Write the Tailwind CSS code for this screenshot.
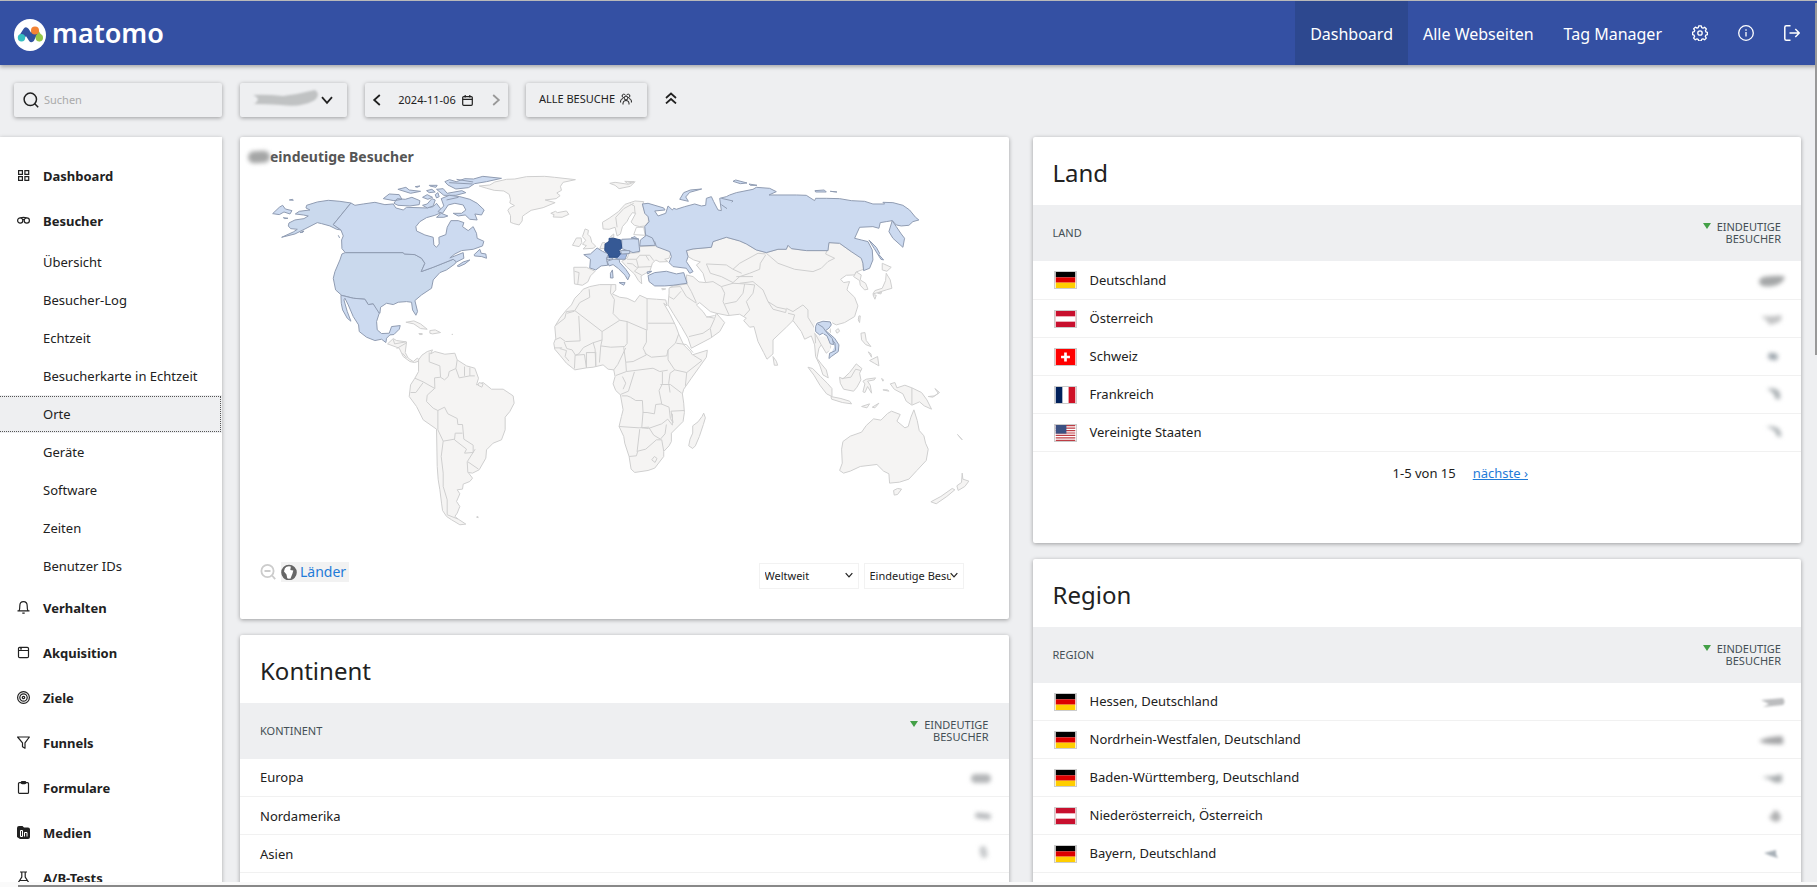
<!DOCTYPE html>
<html lang="de">

<head>
  <meta charset="UTF-8">
  <title>Orte - Matomo</title>
  <script src="https://cdn.jsdelivr.net/npm/@tailwindcss/browser@4"></script>
</head>

<body class="flex flex-col h-screen overflow-hidden bg-[#eeeff1] text-[#212121] text-[13px] font-['Noto_Sans',sans-serif]">

  <!-- Shared icons and flags -->
  <svg class="hidden">
    <symbol id="flag-de" viewBox="0 0 22 18">
      <path fill="#000" d="M0 0h22v6H0z" />
      <path fill="#d00" d="M0 6h22v6H0z" />
      <path fill="#ffce00" d="M0 12h22v6H0z" />
    </symbol>
    <symbol id="flag-at" viewBox="0 0 22 18">
      <path fill="#c8102e" d="M0 0h22v18H0z" />
      <path fill="#fff" d="M0 6h22v6H0z" />
    </symbol>
    <symbol id="flag-ch" viewBox="0 0 22 18">
      <path fill="#f00" d="M0 0h22v18H0z" />
      <path fill="#fff" d="M9.500 4h3v3.500H16v3h-3.500V14h-3v-3.500H6v-3h3.500z" />
    </symbol>
    <symbol id="flag-fr" viewBox="0 0 22 18">
      <path fill="#00205b" d="M0 0h8v18H0z" />
      <path fill="#fff" d="M7.500 0h7v18h-7z" />
      <path fill="#ce1126" d="M14.500 0H22v18h-7.500z" />
    </symbol>
    <symbol id="flag-us" viewBox="0 0 22 18">
      <path fill="#fff" d="M0 0h22v18H0z" />
      <path stroke="#bd3d44" stroke-width="1.400" d="M0 .7h22M0 3.500h22M0 6.200h22M0 9h22M0 11.800h22M0 14.500h22M0 17.300h22" />
      <path fill="#3b5082" d="M0 0h12v9.700H0z" />
    </symbol>
    <symbol id="chevron" viewBox="0 0 12 12">
      <path fill="none" stroke="currentColor" stroke-width="1.800" d="M1 3.200 6 8.800l5-5.600" />
    </symbol>
  </svg>

  <div class="h-px shrink-0 bg-[#c0c0c0]"></div>

  <header class="relative z-10 flex h-16 shrink-0 items-center justify-between bg-[#3450a3] text-white shadow-[0_2px_4px_rgba(0,0,0,0.3)]">
    <a href="#" class="flex items-center gap-[6px] pl-[14px] pt-1">
      <svg class="size-8" viewBox="0 0 32 32">
        <circle cx="16" cy="16" r="16" fill="#fff" />
        <path d="M21 11.500 25.500 19" stroke="#95c748" stroke-width="6" stroke-linecap="round" />
        <path d="M7.500 18.500 12 11.500l5.500 8.500L21 12.500" fill="none" stroke="#3152a0" stroke-width="6" stroke-linejoin="round" stroke-linecap="round" />
        <circle cx="21" cy="11.500" r="4" fill="#f38334" />
        <circle cx="7.500" cy="18.800" r="3.700" fill="#35bfc0" />
        <circle cx="25.300" cy="18.800" r="3.700" fill="#95c748" />
      </svg>
      <span class="-mt-1 text-[27px] leading-8 font-semibold">matomo</span>
    </a>
    <nav class="flex h-full items-center pr-[17px] text-base">
      <a href="#" class="flex h-full items-center bg-[#2d488f] px-[15px] pt-px">Dashboard</a>
      <a href="#" class="flex h-full items-center px-[15px] pt-px">Alle Webseiten</a>
      <a href="#" class="flex h-full items-center px-[15px] pt-px">Tag Manager</a>
      <a href="#" aria-label="Administration" class="px-[15px]">
        <svg class="size-4" viewBox="0 0 16 16" fill="none" stroke="currentColor" stroke-width="1.300" stroke-linejoin="round">
          <path d="M6.700.8h2.600l.4 1.900 1.300.5 1.600-1 1.800 1.800-1 1.600.5 1.300 1.500.4v2.400l-1.600.5-.5 1.300 1 1.600-1.700 1.700-1.700-1-1.300.5-.4 1.600H6.700l-.5-1.600-1.200-.5-1.700 1-1.700-1.700 1-1.700-.5-1.200-1.500-.5V7.100l1.600-.4.5-1.300-1-1.600 1.700-1.700 1.700 1 1.200-.5z" />
          <circle cx="8" cy="8" r="2.200" />
        </svg>
      </a>
      <a href="#" aria-label="Hilfe" class="px-[15px]">
        <svg class="size-4" viewBox="0 0 16 16" fill="none" stroke="currentColor" stroke-width="1.300">
          <circle cx="8" cy="8" r="7.300" />
          <path d="M8 7v4.500M8 4.200v1.500" />
        </svg>
      </a>
      <a href="#" aria-label="Abmelden" class="pl-[15px]">
        <svg class="size-4" viewBox="0 0 16 16" fill="none" stroke="currentColor" stroke-width="1.500">
          <path d="M6.500.8H2.300Q.8.800.8 2.300v11.400q0 1.500 1.500 1.500h4.200M5.500 8h9.300M11.300 4l4 4-4 4" />
        </svg>
      </a>
    </nav>
  </header>

  <div class="flex min-h-0 flex-1 gap-[18px] overflow-hidden pt-[18px] pr-4">

    <!-- Sidebar -->
    <aside class="flex w-[222px] shrink-0 flex-col gap-5">
      <form class="pl-[14px]">
        <label class="flex h-[34px] items-center gap-[5px] rounded-xs pl-[9px] shadow-[0_1px_4px_rgba(0,0,0,0.35)]">
          <svg class="size-4 shrink-0" viewBox="0 0 16 16" fill="none" stroke="#212121" stroke-width="1.500">
            <circle cx="7.300" cy="7.300" r="6.200" />
            <path d="m11.500 11.500 3.700 3.700" />
          </svg>
          <input type="search" aria-label="Suchen" placeholder="Suchen" class="w-full bg-transparent text-[11px] outline-none placeholder:text-[#aaa]">
        </label>
      </form>

      <nav class="flex-1 bg-white pt-4 shadow-[0_1px_4px_rgba(0,0,0,0.3)]">
        <a href="#" class="flex h-[45px] items-center gap-[13px] pt-[2px] pl-[17px] font-bold">
          <svg class="mb-[2px] size-[13px]" viewBox="0 0 13 13" fill="none" stroke="currentColor" stroke-width="1.200">
            <path d="M1.600 1.600h3.800v3.800H1.600zM7.900 1.600h3.800v3.800H7.900zM1.600 7.600h3.800v3.800H1.600zM7.900 7.600h3.800v3.800H7.900z" />
          </svg>
          Dashboard
        </a>
        <a href="#" class="flex h-[45px] items-center gap-[13px] pt-[2px] pl-[17px] font-bold">
          <svg class="mb-[2px] size-[13px]" viewBox="0 0 13 13" fill="none" stroke="currentColor" stroke-width="1.200">
            <circle cx="3.200" cy="6.500" r="2.600" />
            <circle cx="9.800" cy="6.500" r="2.600" />
            <path d="M3.500 3.800c2-.6 4-.6 6 0M5.600 5.800q.9-.8 1.800 0" />
          </svg>
          Besucher
        </a>
        <a href="#" class="flex h-[38px] items-center pt-[2px] pl-[43px]">Übersicht</a>
        <a href="#" class="flex h-[38px] items-center pt-[2px] pl-[43px]">Besucher-Log</a>
        <a href="#" class="flex h-[38px] items-center pt-[2px] pl-[43px]">Echtzeit</a>
        <a href="#" class="flex h-[38px] items-center pt-[2px] pl-[43px]">Besucherkarte in Echtzeit</a>
        <div class="bg-[#eeeff1] py-px pr-px">
          <a href="#" class="flex h-9 items-center border-y border-r border-dotted border-[#555] pt-[2px] pl-[43px]">Orte</a>
        </div>
        <a href="#" class="flex h-[38px] items-center pt-[2px] pl-[43px]">Geräte</a>
        <a href="#" class="flex h-[38px] items-center pt-[2px] pl-[43px]">Software</a>
        <a href="#" class="flex h-[38px] items-center pt-[2px] pl-[43px]">Zeiten</a>
        <a href="#" class="flex h-[38px] items-center pt-[2px] pl-[43px]">Benutzer IDs</a>
        <a href="#" class="flex h-[45px] items-center gap-[13px] pt-[2px] pl-[17px] font-bold">
          <svg class="mb-[2px] size-[13px]" viewBox="0 0 13 13" fill="none" stroke="currentColor" stroke-width="1.200">
            <path d="M.5 9.900h12M2 9.900q.8-1 .8-5 0-4.300 3.700-4.300t3.700 4.300q0 4 .8 5M5.300 12.100h2.400" />
          </svg>
          Verhalten
        </a>
        <a href="#" class="flex h-[45px] items-center gap-[13px] pt-[2px] pl-[17px] font-bold">
          <svg class="mb-[2px] size-[13px]" viewBox="0 0 13 13" fill="none" stroke="currentColor" stroke-width="1.200">
            <rect x="1.500" y="1.300" width="10" height="10.400" rx="1.200" />
            <path d="M1.500 4.500h10M3 2.900h2" />
          </svg>
          Akquisition
        </a>
        <a href="#" class="flex h-[45px] items-center gap-[13px] pt-[2px] pl-[17px] font-bold">
          <svg class="mb-[2px] size-[13px]" viewBox="0 0 13 13" fill="none" stroke="currentColor" stroke-width="1.200">
            <circle cx="6.500" cy="6.500" r="5.900" />
            <circle cx="6.500" cy="6.500" r="3.700" />
            <circle cx="6.500" cy="6.500" r="1.200" />
          </svg>
          Ziele
        </a>
        <a href="#" class="flex h-[45px] items-center gap-[13px] pt-[2px] pl-[17px] font-bold">
          <svg class="mb-[2px] size-[13px]" viewBox="0 0 13 13" fill="none" stroke="currentColor" stroke-width="1.200" stroke-linejoin="round">
            <path d="M.6 1h11.800L8 6.800v5.400l-2.500-1.500V6.800z" />
          </svg>
          Funnels
        </a>
        <a href="#" class="flex h-[45px] items-center gap-[13px] pt-[2px] pl-[17px] font-bold">
          <svg class="mb-[2px] size-[13px]" viewBox="0 0 13 13" fill="none" stroke="currentColor" stroke-width="1.200">
            <rect x="1.500" y="1.600" width="10" height="10.800" rx="1" />
            <rect x="4.300" y=".6" width="4.400" height="2" rx=".8" />
          </svg>
          Formulare
        </a>
        <a href="#" class="flex h-[45px] items-center gap-[13px] pt-[2px] pl-[17px] font-bold">
          <svg class="mb-[2px] size-[13px]" viewBox="0 0 13 13">
            <path fill="currentColor" d="M2 0h3.500L7 1.600h4q2 0 2 2V11q0 2-2 2H3L0 11V2q0-2 2-2z" />
            <path fill="none" stroke="#fff" d="M3.500 10.500v-6h2v6zM7.500 10.500v-4h2.500v4" />
          </svg>
          Medien
        </a>
        <a href="#" class="flex h-[45px] items-center gap-[13px] pt-[2px] pl-[17px] font-bold">
          <svg class="mb-[2px] size-[13px]" viewBox="0 0 13 13" fill="none" stroke="currentColor" stroke-width="1.200">
            <path d="M3 1h7M4.800 1v5L1 12h11L8.200 6V1M3 9.500h7" />
          </svg>
          A/B-Tests
        </a>
      </nav>
    </aside>

    <main class="flex min-w-0 flex-1 flex-col gap-5">

      <!-- Site, period and segment selectors -->
      <div class="flex h-[34px] shrink-0 items-center gap-[18px] text-[11px]">
        <button aria-label="Website" class="flex h-full w-[107px] items-center justify-between rounded-xs pr-[14px] pl-3 shadow-[0_1px_4px_rgba(0,0,0,0.35)]">
          <svg class="h-5 w-[66px] blur-[1px]" viewBox="0 0 66 20" aria-hidden="true">
            <path fill="#c0c2c3" d="M1 5q12-1 30 1 16-2 32-6 6 4 0 10-14 8-34 5Q12 14 2 14q8-5-1-9z" />
          </svg>
          <svg class="size-3">
            <use href="#chevron" />
          </svg>
        </button>
        <div class="flex h-full w-[143px] items-center justify-between rounded-xs px-[6px] shadow-[0_1px_4px_rgba(0,0,0,0.35)]">
          <button aria-label="Vorheriger Zeitraum"><svg class="size-3 rotate-90">
              <use href="#chevron" />
            </svg></button>
          <button class="flex items-center gap-[6px] pr-[2px]">
            2024-11-06
            <svg class="size-[11px]" viewBox="0 0 11 11" fill="none" stroke="currentColor" stroke-width="1.200">
              <rect x=".7" y="1.600" width="9.600" height="8.700" rx="1" />
              <path d="M.7 4.400h9.600M3.200 0v2.500M7.800 0v2.500" />
            </svg>
          </button>
          <button aria-label="Nächster Zeitraum" class="text-[#999]"><svg class="size-3 -rotate-90">
              <use href="#chevron" />
            </svg></button>
        </div>
        <button class="flex h-full w-[121px] items-center justify-center gap-[5px] rounded-xs pr-[2px] pb-[2px] shadow-[0_1px_4px_rgba(0,0,0,0.35)]">
          ALLE BESUCHE
          <svg class="size-3" viewBox="0 0 12 12" fill="none" stroke="currentColor">
            <circle cx="6" cy="5" r="1.900" />
            <path d="M3 11.500V10q0-2.500 3-2.500T9 10v1.500M3.800 4.600A1.700 1.700 0 1 1 5.400 2.300M8.200 4.600a1.700 1.700 0 1 0-1.600-2.300M.6 9.500V8q0-2 2.400-2.500M11.400 9.500V8q0-2-2.400-2.500" />
          </svg>
        </button>
        <button aria-label="Steuerelemente ausblenden" class="pb-1">
          <svg class="size-3" viewBox="0 0 12 12" fill="none" stroke="currentColor" stroke-width="1.700">
            <path d="m1 6 5-4.500L11 6M1 11.500 6 7l5 4.500" />
          </svg>
        </button>
      </div>

      <div class="grid grid-cols-2 items-start gap-6">
        <div class="flex flex-col gap-4">

          <!-- Visitor map -->
          <section class="rounded-xs bg-white pb-[30px] shadow-[0_1px_4px_rgba(0,0,0,0.35)]">
            <h2 class="flex h-[33px] items-center pt-[6px] pl-2 text-sm font-bold text-[#555]">
              <span class="h-3 w-[22px] -rotate-3 rounded-full bg-[#a5a6a6] blur-[2px]"></span>eindeutige Besucher
            </h2>
            <svg class="block w-full" viewBox="0 120 2307 1146" stroke-width="3" stroke-linejoin="round" role="img" aria-label="Weltkarte">
              <!-- Countries without visits -->
              <g fill="#f5f4f3" stroke="#cfcfcf">
                <!-- Greenland, Iceland, Svalbard -->
                <path d="M718 168l32-3 15-9 35-8 25-1 35-7 55-1 30 3 62 7-37 8-8 12 3 12-14 8 10 8-12 9-33 4 30 8-36 15-36 8-18 12-8 6-1 14-9 12-16-4-10-4 0-20-8-16 6-8 14-6-14-8 2-10-4-16-16-10-29-2-22-6z" />
                <path d="M933 250l14-6 6 4 27-5 7 10-20 9-27-1 3-7z" />
                <path d="M1110 160l16-3 40 6 20-8-14 14-34 7-12-10zM1155 154l28 1-20 5z" />
                <!-- Central America and Caribbean -->
                <path d="M443 642L460 626 470 632 500 636 496 668 505 685 520 695 532 685 542 692 524 698 510 695 490 680 478 655z" />
                <path d="M460 628l4 14 34-6M470 656l28-16M500 684l-12-14" fill="none" />
                <path d="M498 577l24-4 20 9 20 16-20-2-20-14zM570 602l16-2 16 8-24 4-8-2zM537 611l10 0 0 3-8 0z" />
              </g>
              <g fill="#f5f4f3" stroke="#cfcfcf" transform="translate(240 510)">
                <!-- South America -->
                <path d="M296 180L306 166 322 155 338 150 332 162 345 155 375 163 405 160 412 180 440 198 465 205 476 235 470 255 490 248 515 268 550 268 580 288 583 310 570 335 556 352 556 390 545 420 520 430 500 450 498 475 478 510 458 520 445 518 458 535 450 545 430 553 428 568 412 570 420 582 410 605 420 620 412 640 405 650 415 658 438 673 420 675 395 660 380 650 368 632 365 610 360 570 355 540 352 500 350 388 310 360 290 320 268 290 272 255 285 235 296 215z" />
                <path d="M328 158L328 186 360 198 362 232 374 240 385 230 388 215 408 206 412 180M408 206L418 234 450 228 465 228M434 228L434 200M450 228L450 203M285 235L310 246 345 266 344 234 362 232M310 248L288 278 272 278M344 266L322 286 320 305 340 325 354 332 374 322 384 342 412 356 414 374 428 374 432 418 460 436 460 458 434 460 440 448 404 420 406 400 428 400M354 332L354 390 370 424 404 418M370 424L364 470 370 520 370 560 382 600 382 645 415 658M466 448L442 486 444 518M444 486L476 508" fill="none" />
                <path d="M470 652l4-2 1 4zM396 103l2 0 0 2zM474 256l4-8 12 4-4 10z" />
              </g>
              <g fill="#f5f4f3" stroke="#cfcfcf" transform="translate(900 0)">
                <!-- Scandinavia, Britain, Iberia, Balkans, Ukraine -->
                <path d="M190 297L188 277 208 265 236 245 256 223 286 213 312 215 308 224 316 250 326 262 326 276 315 288 300 290 284 286 274 276 288 250 278 248 268 262 262 274 248 290 242 312 232 318 226 292 208 298z" />
                <path d="M232 292L228 262 252 236 282 220M286 250L284 228 272 222M290 292L312 292 316 316 282 314z" fill="none" />
                <path d="M136 297L146 301 144 313 152 321 156 337 168 349 160 355 130 357 140 347 128 343 138 331 128 320zM98 346l12-22 14 0 2 14-8 12zM180 356l8-18 8 0 0 18zM212 320l10-8 0 12z" />
                <path d="M102 412L140 412 166 424 152 438 144 456 128 466 104 462zM104 424l14 4-4 34" />
                <path d="M300 350L345 348 358 345 395 365 388 385 375 388 385 395 360 396 348 390 338 400 330 425 318 430 304 438 306 462 296 452 284 432 262 412 246 394 262 385 268 370 298 368z" />
                <path d="M262 388L290 388 300 376 330 376 342 392M278 402L290 412 334 410M290 388L296 412 284 424 306 436M262 400L278 402M318 376L328 392" fill="none" />
                <path d="M366 476l12 1-10 3z" />
                <!-- Asia -->
                <path d="M445 380L440 362 460 357 515 352 520 335 560 322 600 333 620 342 650 360 680 368 715 358 740 358 745 346 755 356 800 362 865 362 868 338 900 340 935 365 968 380 972 418 950 426 945 435 920 436 903 448 912 458 930 455 925 470 922 480 945 502 955 528 945 560 915 578 890 585 870 575 875 640 872 660 860 670 845 645 838 655 832 685 845 702 860 720 866 744 850 735 840 705 828 680 825 645 815 618 795 628 785 605 770 585 760 572 740 592 700 630 700 672 682 688 672 668 655 635 643 590 630 592 612 572 620 565 600 553 565 557 530 550 512 545 480 518 470 525 490 545 500 560 525 565 530 550 555 578 540 605 512 625 455 655 445 625 425 590 400 550 385 525 388 490 388 475 400 468 442 462 440 435 460 440 478 456 498 458 490 430 470 405 482 396 462 390z" />
                <path d="M442 462L455 485 470 518M390 472L422 470 440 500 470 520M388 500L402 508 424 484M448 620L490 610 512 595 525 566M500 562L525 557M512 596L516 622M498 458L520 455 545 470 555 490 550 515 568 555M545 470L580 460 615 462 610 490 590 515 555 522M500 402L560 405 580 418 600 400 655 370 678 372M500 402L512 430 545 440 580 458M580 458L600 440 630 430 660 418 662 400 678 375M580 418L606 430M600 460L640 455 670 480 685 515M615 462L645 465 640 490 620 515 630 540 612 560M685 515L712 532 740 538 738 548 700 538zM740 535L760 545 790 525 805 540 805 562 825 595 828 640M745 550L765 555 760 572M680 370L715 400 765 418 820 425 845 415 865 395 885 385 858 372 862 362M826 610L845 645M590 440L640 440" fill="none" />
                <path d="M700 680l10 14 4 12-10 0z" />
                <!-- Korea, Japan -->
                <path d="M950 426L965 435 962 450 978 460 985 478 975 480 962 466 960 452 942 440zM1040 430L1052 450 1057 475 1040 480 1015 488 1000 492 1006 482 1028 475 1038 452zM1028 400L1055 412 1042 424 1028 420zM1000 494L1010 496 1006 508zM1014 490l12-4-2 6z" />
                <!-- Africa -->
                <g transform="translate(0 420)">
                  <path d="M130 58l20-8 30-6 48 0 0 16-10 12 22 10 22 3 23 11 15-20 22 10 28 2 28 2 4 18-10-8 20 35 16 33 10 27 14 30 20 20 6 10 45-14-3 21-20 28-25 35-23 33-4 14 4 28 2 28-4 27-35 35 0 25-7 13-16 17 0 15-27 35-20 7-40 6-11-10-6-38-13-40-3-20-14-30 7-30 5-20-8-45-14-13-8-20 6-22-4-20-17-2-15-13-30 7-20 2-35 6-25-20-18-22-17-20-3-18 6-15-3-35 15-25 20-25 15-15 10-20 17-17z" />
                  <path fill="none" d="M148 58l2 24-30 16-15 24-25 3-5 20-28 22M105 122l82 63 53-34-20-20 4-42-12-20 2-24M117 138l4 75-44 2-16-12-14 6M82 130l22-6M187 185l0 25-28 9-28 14-14 19-10 4-10-16-16-4-8-20M240 151l22 4 60 26 0-94M325 160l80 0M320 181l0 36-10 18 10 20-40 20-22 2-6-44 10-12 0-66M187 210l-4 18 30 4 40-2M183 228l-4 50M160 218l6 20 2 50M150 248l-10 0 0 46M106 256l-2 40M106 256l28-2 6 40M140 248l26 0M168 246l0 44M60 236l20 6-4 18 12 14M45 234l22 0M258 277l2 28-32 12M222 300l12-16 24-50M260 305l80-10 20 10 24-4M315 250l20 12 46-4 4-18M385 240l22-20 10-28M410 220l30 4 20 24M385 240l0 30 20 30-14 10-4 30 4 28M405 300l36 8 46-36-26-16M441 308l-4 40M362 344l30 0 34 26M368 306l0 36-10 20 8 40-18 2-4 28-22-4-12 0-2-36-20 0-16-10-10-4-16 0M284 306l-18 58-24 10M248 320l10 20-8 18M310 426l-4 48 20 2 40-14 18-14 14 18 0-34M238 470l60 4 30-2M300 478l-8 68M328 474l14 22 20 12 14-16 4-28M268 560l22-2 4-14 24-6 32-28 16 0 6 34M364 402l24 10 4 34 8 12-6-34 40-2" />
                  <path fill="none" d="M336 570l8-10 8 6-6 12z" />
                  <path d="M492 430l5 14-6 20-12 36-12 28-8 8-12-8 4-20 8-18 0-22 16-12 12-16z" />
                </g>
              </g>
              <g fill="#f5f4f3" stroke="#cfcfcf" transform="translate(1560 510)">
                <!-- Indonesia, Philippines, New Guinea -->
                <path d="M145 202l14 4 24 24 20 20 14 16 0 24-16-8-20-26-18-30zM214 290l30 6 26 8 6 8-28-4-32-10zM240 232L250 237 270 218 290 192 307 206 300 220 304 240 292 262 282 274 252 268 242 250z" />
                <path d="M246 236l28-4 14-24 16 4" fill="none" />
                <path d="M310 244l10-6 28-4-4 6-20 4 8 12 4 24-12-20-8 18-6-2 6-24zM366 236l6 4-2 4zM370 270l14 0 4 4zM306 320l24-8-8 12zM338 322l20-12-12 14zM304 100l12-2 4 24 14 18-16-6-12-14zM326 156l8 6 2 10zM330 182l24-12 4 28-14-8zM298 48l4 0-2 20-4-8zM228 92l8-6 4 8-8 6z" />
                <path d="M392 252L406 248 412 264 436 256 457 264 486 278 502 300 516 328 494 318 480 306 457 316 440 304 430 282 404 268z" />
                <path d="M457 264l0 50M506 290l20-2 14-10-14-12 10 14-16 12z" />
                <!-- Australia, New Zealand -->
                <path d="M246 448L250 425 272 409 306 397 320 377 342 357 364 361 384 341 396 334 422 344 412 364 436 384 446 380 454 352 463 330 473 362 479 392 493 408 498 430 506 448 500 482 472 512 448 538 420 547 390 550 388 522 372 514 352 494 302 500 272 514 252 520 240 512 248 490z" />
                <path d="M402 572l12-6 12 2-12 16-10 2zM594 404l14 16zM608 520L610 538 628 544 616 560 596 572 592 558 606 548zM514 606L544 590 578 566 586 570 562 590 530 612z" />
              </g>

              <!-- Countries with visits -->
              <g fill="#ccdaf0" stroke="#909cb2">
                <!-- USA and Alaska -->
                <path fill="#cad9ed" d="M333 219L300 214 265 211 232 216 200 226 198 234 210 240 178 244 166 252 190 255 205 258 192 266 165 270 147 279 145 288 152 296 172 298 160 306 125 322 165 312 195 297 232 278 245 281 270 288 290 298 303 300 280 284zM180 308l12-5-3 4zM295 316l4 8" />
                <path fill="#cad9ed" d="M306 372L316 368 490 368 493 372 525 374 545 385 555 400 544 425 580 412 610 400 640 388 650 395 645 402 620 420 600 428 580 450 575 475 545 495 525 512 533 545 528 556 518 540 515 517 500 515 475 517 460 524 440 520 422 532 420 550 410 545 400 522 385 524 375 508 340 505 305 496 287 480 280 445 285 425 300 390z" />
                <!-- Mexico -->
                <path d="M303 496L340 505 375 508 385 524 400 522 418 550 410 575 412 600 425 611 448 610 455 590 481 587 478 598 462 614 450 615 440 625 438 638 425 628 405 632 380 622 358 605 356 585 340 560 325 525 315 505 312 510 322 545 333 574 322 565 308 540 304 520z" />
                <!-- Canada -->
                <path d="M333 219L345 226 370 222 405 217 435 224 460 222 468 234 490 240 500 232 560 234 580 230 590 220 602 236 600 250 585 256 560 263 540 275 528 290 530 303 555 315 580 322 582 345 590 352 598 342 597 322 618 314 622 292 633 272 655 272 672 278 668 290 685 302 700 290 710 310 712 325 732 334 728 348 700 358 665 362 645 372 630 384 670 368 672 385 650 396 640 388 610 400 580 412 544 425 555 400 545 385 525 374 493 372 490 368 316 368 306 356 305 330 310 318 303 300 280 284z" />
                <path d="M703 374l17-16 4 12 14 2 2 13-14-5-22-2zM652 408l18-12 20-6-15 12-18 8zM430 206l18-14 30 2 8 14-24 4zM462 220l10-14 24 2 20-6 24 10-2 12-28 4-36-2zM474 178l24-6 10 8 34 4-30 6zM526 170l14-2-8 4zM548 202l14-8 16 8-14 6zM568 166l24 0-4 6-18-4zM560 182l16-4 10 8-18 2zM586 194l8-6 4 12-8 4zM548 226l14-4 14-16 10 4-6 18-18 6zM590 178l20-2 12 14 44-8 12 6-30 8-36 0zM615 155l14-6 20 6 26-9 26 1 28-8 56 6-45 10-36 6-18 12-38 4-24-12z" />
                <path d="M604 206L628 196 660 200 690 208 712 220 733 240 725 255 705 252 712 270 690 268 676 255 655 258 640 250 665 250 678 240 670 225 645 220 625 225 608 250 594 245 612 228zM590 262l14-12 20 8-12 4zM620 210l36-8M628 158l70 4M650 148l50 8" />
                <path d="M98 251l20-19 10-6 8 11 20 5-6 10-18-6-14 8zM148 210l10-2 2 3zM130 263l14 2-10 1z" />
              </g>
              <g fill="#ccdaf0" stroke="#909cb2" transform="translate(900 0)">
                <!-- Russia -->
                <path d="M308 222L325 220 372 234 376 240 345 243 355 258 378 250 385 228 398 240 402 235 410 238 435 230 465 222 485 228 498 226 500 205 515 200 522 215 535 240 545 242 540 205 560 200 570 195 590 188 640 178 650 172 690 175 710 185 688 195 715 195 770 195 800 196 825 212 828 205 860 205 900 206 935 212 975 214 1000 222 1035 222 1030 217 1060 218 1090 226 1110 240 1128 262 1138 270 1120 275 1108 286 1085 288 1070 285 1058 272 1040 275 1022 278 1018 295 1000 290 960 292 945 325 965 330 985 335 998 360 1000 390 990 415 972 422 970 400 965 385 935 365 900 340 868 338 865 362 800 362 755 356 745 346 740 358 715 358 680 368 650 360 620 342 600 333 560 322 520 335 515 352 460 357 440 362 445 380 440 395 460 425 450 430 440 415 400 410 388 398 395 380 390 365 350 350 345 335 335 325 318 318 315 290 328 275 325 260 315 250z" />
                <path d="M1058 272L1070 290 1085 312 1095 325 1090 352 1060 325 1048 305zM988 330L1010 352 1020 370 1018 374 1032 390 1024 388 1004 356zM420 208L432 188 452 180 486 177 450 187 438 201 446 214zM580 154l8-4 34 9-20 2zM628 162l24 4-20 0zM826 182l28-2 6 6-32 0zM872 184l20 2zM545 205L580 213 576 217M545 224L562 236" />
                <!-- Europe and Turkey -->
                <path d="M246 328l50-2 4 38-20 4-34-12zM300 348L302 330 320 316 338 324 347 346zM274 324l12-4 8 8z" />
                <path d="M132 374L152 372 172 354 188 364 206 372 200 386 204 406 184 408 168 420 150 414 152 388z" />
                <path d="M202 394L220 388 238 388 240 398 258 418 270 436 264 450 256 436 236 416 220 404 208 408zM238 458l18 0-4 8zM212 430l6-10 2 24-8 0z" />
                <path d="M325 437L345 428 380 424 410 432 432 428 442 460 400 466 375 468 345 468 328 455zM322 426l14-2-12 8z" />
                <path d="M242 362l28 0 0 8-24 4zM200 384l14-4 6 6-16 4z" />
                <path fill="#a9bee6" d="M218 380l24-8 20 0-6 16-20 0z" />
                <path fill="#365995" stroke="#2d4e88" d="M208 325L222 325 243 330 246 354 238 362 242 372 234 382 208 382 206 372 195 362 196 342 208 334z" />
                <!-- Vietnam, Laos, with a white halo -->
                <path stroke="#fff" stroke-width="9" d="M828 590L832 580 850 574 872 576 875 585 868 595 858 602 885 625 898 645 896 665 875 680 868 686 870 670 880 650 862 615 840 615 828 605z" />
                <path d="M828 590L832 580 850 574 872 576 875 585 868 595 858 602 885 625 898 645 896 665 875 680 868 686 870 670 888 662 886 640 858 605 840 615 828 605z" />
                <path d="M834 582L850 592 858 604 878 626 882 644 872 642 862 618 852 612" />
              </g>
            </svg>

            <div class="flex items-start justify-between pt-[10px] pr-[45px] pl-5">
              <div class="flex items-center gap-[5px]">
                <button aria-label="Verkleinern">
                  <svg class="size-4" viewBox="0 0 16 16" fill="none" stroke="#ccc" stroke-width="1.800">
                    <circle cx="7.500" cy="7" r="6.100" />
                    <path d="M4.500 7h6M12 11.500l3.200 3.700" />
                  </svg>
                </button>
                <a href="#" class="flex h-5 items-center gap-[3px] bg-[#f2f2f2] pr-[3px] text-sm text-[#1f7bd8]">
                  <svg class="size-4" viewBox="0 0 16 16">
                    <circle cx="8" cy="8.500" r="7" fill="#fff" stroke="#666" stroke-width="1.600" />
                    <path fill="#666" d="M1 8.500Q1 3 6 1.600L3.800 4.500 3 7.500l2.500 3 1 5Q1 14 1 8.500zM10 1.800q5 1.700 5 6.700 0 5-4.500 6.500l-.8-1 1.800-4.500.8-3-3-.4z" />
                  </svg>
                  Länder
                </a>
              </div>
              <div class="flex gap-[5px] pt-[1px] text-[11px]">
                <div class="relative">
                  <select aria-label="Region" class="h-[26px] w-[100px] appearance-none border border-[#f2f2f2] pr-3 pl-[5px] outline-none">
                    <option>Weltweit</option>
                  </select>
                  <svg class="pointer-events-none absolute top-2 right-[6px] size-2">
                    <use href="#chevron" />
                  </svg>
                </div>
                <div class="relative">
                  <select aria-label="Metrik" class="h-[26px] w-[100px] appearance-none border border-[#f2f2f2] pr-3 pl-[5px] outline-none">
                    <option>Eindeutige Besu</option>
                  </select>
                  <svg class="pointer-events-none absolute top-2 right-[6px] size-2">
                    <use href="#chevron" />
                  </svg>
                </div>
              </div>
            </div>
          </section>

          <!-- Continents -->
          <section class="rounded-xs bg-white shadow-[0_1px_4px_rgba(0,0,0,0.35)]">
            <h2 class="flex h-[68px] items-center pt-1 pl-5 text-2xl">Kontinent</h2>
            <table class="w-full">
              <thead class="h-14 bg-[#eeeff1] text-[11px] leading-3 text-[#444f55]">
                <tr>
                  <th class="pl-5 text-left font-normal">KONTINENT</th>
                  <th class="w-[18%] pr-5 text-right font-normal"><span class="mr-[6px] mb-[2px] inline-block border-x-4 border-t-[6px] border-x-transparent border-t-[#43a047]"></span>EINDEUTIGE<br>BESUCHER</th>
                </tr>
              </thead>
              <tbody>
                <tr class="h-[38px] border-b border-[#f1f1f1]">
                  <td class="pt-px pl-5">Europa</td>
                  <td class="pt-px pr-[18px]"><span class="ml-auto block h-[9px] w-5 rounded-full bg-[#b4b6b8] blur-[2px]"></span></td>
                </tr>
                <tr class="h-[38px] border-b border-[#f1f1f1]">
                  <td class="pt-px pl-5">Nordamerika</td>
                  <td class="pt-px pr-[18px]"><span class="ml-auto block h-[6px] w-4 rotate-6 rounded-full bg-[#b9bbbe] blur-[2px]"></span></td>
                </tr>
                <tr class="h-[38px] border-b border-[#f1f1f1]">
                  <td class="pt-px pl-5">Asien</td>
                  <td class="pr-[22px] pb-1"><span class="ml-auto block h-3 w-[7px] -rotate-12 rounded-full bg-[#c8cacc] blur-[2px]"></span></td>
                </tr>
                <tr class="h-[38px] border-b border-[#f1f1f1]">
                  <td></td>
                  <td></td>
                </tr>
              </tbody>
            </table>
          </section>
        </div>

        <div class="flex flex-col gap-4">

          <!-- Countries -->
          <section class="rounded-xs bg-white pb-[63px] shadow-[0_1px_4px_rgba(0,0,0,0.35)]">
            <h2 class="flex h-[68px] items-center pt-1 pl-5 text-2xl">Land</h2>
            <table class="w-full">
              <thead class="h-14 bg-[#eeeff1] text-[11px] leading-3 text-[#444f55]">
                <tr>
                  <th class="pl-5 text-left font-normal">LAND</th>
                  <th class="w-[18%] pr-5 text-right font-normal"><span class="mr-[6px] mb-[2px] inline-block border-x-4 border-t-[6px] border-x-transparent border-t-[#43a047]"></span>EINDEUTIGE<br>BESUCHER</th>
                </tr>
              </thead>
              <tbody>
                <tr class="h-[38px] border-b border-[#f1f1f1]">
                  <td class="pt-px pl-[21px]">
                    <div class="flex items-center gap-[13px]"><svg class="h-[18px] w-[23px] border border-[#ccc]"><use href="#flag-de" /></svg>Deutschland</div>
                  </td>
                  <td class="pt-[3px] pr-[15px]"><svg class="ml-auto h-[14px] w-7 blur-[2px]" viewBox="0 0 28 14" aria-hidden="true"><path fill="#a5a7a8" d="M1 8q0-6 13-6 10-1 13 1-3 8-12 9Q2 14 1 8z" /></svg></td>
                </tr>
                <tr class="h-[38px] border-b border-[#f1f1f1]">
                  <td class="pt-px pl-[21px]">
                    <div class="flex items-center gap-[13px]"><svg class="h-[18px] w-[23px] border border-[#ccc]"><use href="#flag-at" /></svg>Österreich</div>
                  </td>
                  <td class="pt-[3px] pr-[18px]"><svg class="ml-auto h-3 w-6 blur-[2px]" viewBox="0 0 24 12" aria-hidden="true"><path fill="#c3c4c5" d="M2 2q10 1 20-1 2 4-2 7l-9 3Q8 6 2 2z" /></svg></td>
                </tr>
                <tr class="h-[38px] border-b border-[#f1f1f1]">
                  <td class="pt-px pl-[21px]">
                    <div class="flex items-center gap-[13px]"><svg class="h-[18px] w-[23px] border border-[#ccc]"><use href="#flag-ch" /></svg>Schweiz</div>
                  </td>
                  <td class="pr-[23px]"><span class="ml-auto block h-[7px] w-[10px] rotate-12 rounded-full bg-[#a0a8af] blur-[2px]"></span></td>
                </tr>
                <tr class="h-[38px] border-b border-[#f1f1f1]">
                  <td class="pt-px pl-[21px]">
                    <div class="flex items-center gap-[13px]"><svg class="h-[18px] w-[23px] border border-[#ccc]"><use href="#flag-fr" /></svg>Frankreich</div>
                  </td>
                  <td class="pr-[19px]"><svg class="ml-auto h-[14px] w-4 blur-[2px]" viewBox="0 0 16 14" aria-hidden="true"><path fill="#aab0b3" d="M1 2q8-2 12 2 2 5 1 8-5 1-5-2Q8 5 1 2z" /></svg></td>
                </tr>
                <tr class="h-[38px] border-b border-[#f1f1f1]">
                  <td class="pt-px pl-[21px]">
                    <div class="flex items-center gap-[13px]"><svg class="h-[18px] w-[23px] border border-[#ccc]"><use href="#flag-us" /></svg>Vereinigte Staaten</div>
                  </td>
                  <td class="pr-[18px]"><svg class="ml-auto h-[14px] w-[18px] blur-[2px]" viewBox="0 0 18 14" aria-hidden="true"><path fill="#aab0b3" d="M1 2q8-2 13 2 3 5 2 8l-4-1Q11 4 1 2z" /></svg></td>
                </tr>
              </tbody>
            </table>
            <div class="mt-[14px] flex justify-center gap-[17px] pl-[87px] leading-[14px]">
              <span>1-5 von 15</span>
              <a href="#" class="text-[#1f7bd8] underline">nächste ›</a>
            </div>
          </section>

          <!-- Regions -->
          <section class="rounded-xs bg-white shadow-[0_1px_4px_rgba(0,0,0,0.35)]">
            <h2 class="flex h-[68px] items-center pt-1 pl-5 text-2xl">Region</h2>
            <table class="w-full">
              <thead class="h-14 bg-[#eeeff1] text-[11px] leading-3 text-[#444f55]">
                <tr>
                  <th class="pl-5 text-left font-normal">REGION</th>
                  <th class="w-[18%] pr-5 text-right font-normal"><span class="mr-[6px] mb-[2px] inline-block border-x-4 border-t-[6px] border-x-transparent border-t-[#43a047]"></span>EINDEUTIGE<br>BESUCHER</th>
                </tr>
              </thead>
              <tbody>
                <tr class="h-[38px] border-b border-[#f1f1f1]">
                  <td class="pt-px pl-[21px]">
                    <div class="flex items-center gap-[13px]"><svg class="h-[18px] w-[23px] border border-[#ccc]"><use href="#flag-de" /></svg>Hessen, Deutschland</div>
                  </td>
                  <td class="pt-px pr-4"><svg class="ml-auto h-[10px] w-[26px] blur-[1px]" viewBox="0 0 26 10" aria-hidden="true"><path fill="#bcbdbf" d="M2 3l22-2q3 4 0 7L4 10l6-3z" /></svg></td>
                </tr>
                <tr class="h-[38px] border-b border-[#f1f1f1]">
                  <td class="pt-px pl-[21px]">
                    <div class="flex items-center gap-[13px]"><svg class="h-[18px] w-[23px] border border-[#ccc]"><use href="#flag-de" /></svg>Nordrhein-Westfalen, Deutschland</div>
                  </td>
                  <td class="pt-px pr-[17px]"><svg class="ml-auto h-[10px] w-[26px] blur-[2px]" viewBox="0 0 26 10" aria-hidden="true"><path fill="#a3a4a6" d="M1 6q6-4 23-5 2 4 1 8Q8 10 1 6z" /></svg></td>
                </tr>
                <tr class="h-[38px] border-b border-[#f1f1f1]">
                  <td class="pt-px pl-[21px]">
                    <div class="flex items-center gap-[13px]"><svg class="h-[18px] w-[23px] border border-[#ccc]"><use href="#flag-de" /></svg>Baden-Württemberg, Deutschland</div>
                  </td>
                  <td class="pt-px pr-[18px]"><svg class="ml-auto h-[10px] w-[22px] blur-[2px]" viewBox="0 0 22 10" aria-hidden="true"><path fill="#a9adaf" d="M1 4q10 0 20-3v8q-8 2-11-2z" /></svg></td>
                </tr>
                <tr class="h-[38px] border-b border-[#f1f1f1]">
                  <td class="pt-px pl-[21px]">
                    <div class="flex items-center gap-[13px]"><svg class="h-[18px] w-[23px] border border-[#ccc]"><use href="#flag-at" /></svg>Niederösterreich, Österreich</div>
                  </td>
                  <td class="pr-5"><svg class="ml-auto size-3 blur-[2px]" viewBox="0 0 12 12" aria-hidden="true"><path fill="#b0b1b2" d="M6 0q5 2 6 8-2 4-6 4l-6-4z" /></svg></td>
                </tr>
                <tr class="h-[38px] border-b border-[#f1f1f1]">
                  <td class="pt-px pl-[21px]">
                    <div class="flex items-center gap-[13px]"><svg class="h-[18px] w-[23px] border border-[#ccc]"><use href="#flag-de" /></svg>Bayern, Deutschland</div>
                  </td>
                  <td class="pr-[22px]"><svg class="ml-auto h-[10px] w-4 blur-[1px]" viewBox="0 0 16 10" aria-hidden="true"><path fill="#a9b1b8" d="M1 4l12-3 0 4 2 4-7-2z" /></svg></td>
                </tr>
                <tr class="h-[38px] border-b border-[#f1f1f1]">
                  <td></td>
                  <td></td>
                </tr>
              </tbody>
            </table>
          </section>
        </div>
      </div>
    </main>
  </div>

  <!-- Window edges -->
  <div class="h-[5px] shrink-0 bg-[#fafafa] pt-[3px] pl-[18px]">
    <div class="h-[2px] bg-[#888]"></div>
  </div>
  <div class="absolute top-[3px] right-0 z-20 h-[352px] w-[2px] bg-[#999]"></div>
</body>

</html>
